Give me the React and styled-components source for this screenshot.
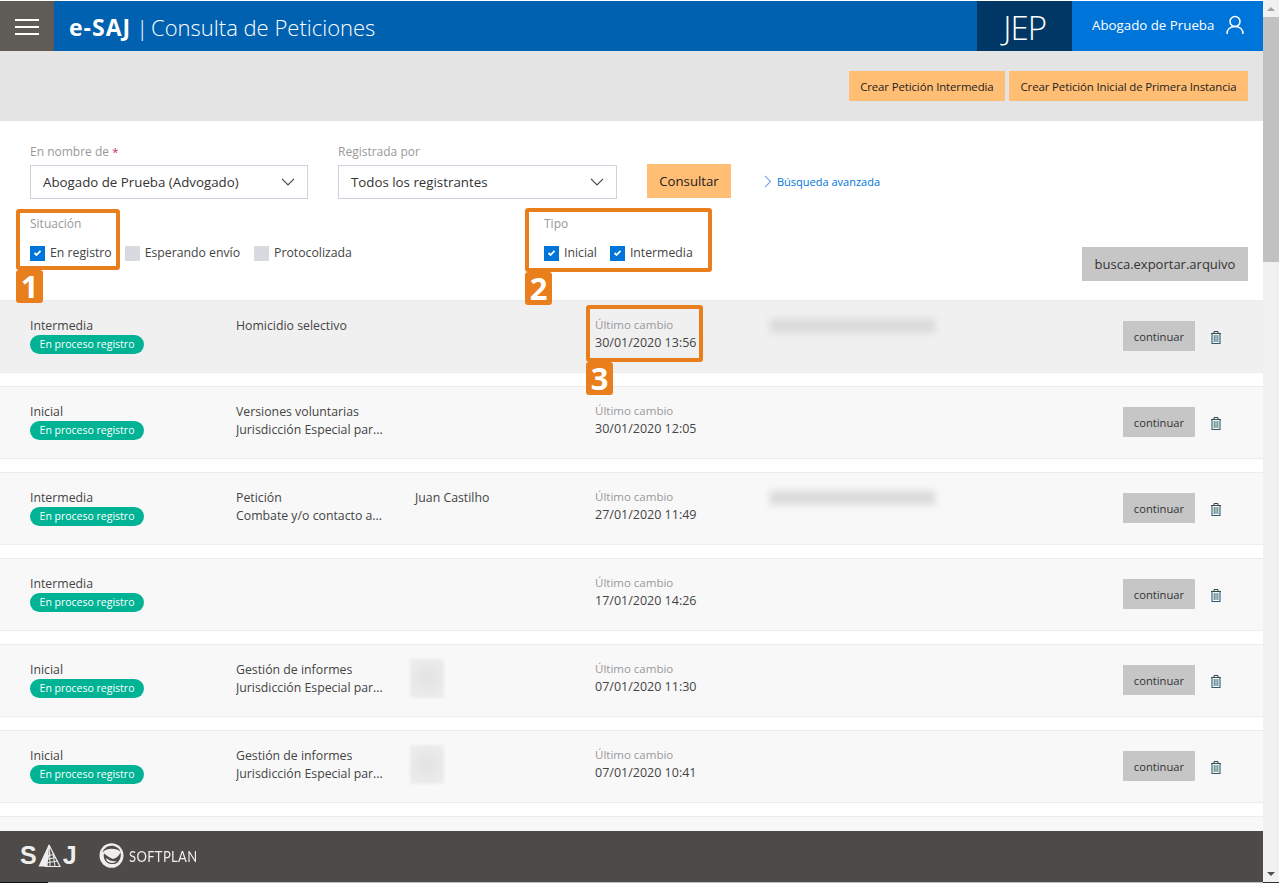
import React from "react";
import styled, { createGlobalStyle } from "styled-components";

const Global = createGlobalStyle`
  html, body { margin: 0; padding: 0; height: 100%; overflow: hidden; background: #fff; }
  #root { height: 100%; }
  * { box-sizing: border-box; }
  body { font-family: "Open Sans", "Noto Sans", "Liberation Sans", sans-serif; color: #333; }
`;

const Shell = styled.div`
  position: relative; display: flex; width: 1279px; height: 883px; overflow: hidden; background: #fff;
`;
const Main = styled.div`flex: 1; min-width: 0; padding-top: 1px;`;
const Scrollbar = styled.div`
  width: 16px; background: #f1f1f1; border-bottom: 1px solid #333; display: flex; flex-direction: column; align-items: center;
`;
const ScrollArrow = styled.div`
  width: 0; height: 0; margin: ${p => p.$down ? "auto 0 6px" : "7px 0 6px"};
  border-left: 4px solid transparent; border-right: 4px solid transparent;
  ${p => p.$down ? "border-top: 4px solid #505050;" : "border-bottom: 4px solid #a3a3a3;"}
`;
const ScrollThumb = styled.div`width: 100%; height: 245px; background: #c1c1c1;`;

const Header = styled.header`display: flex; height: 50px; background: #0061b0; color: #fff;`;
const Burger = styled.div`
  width: 54px; background: #5f5b56; display: flex; flex-direction: column; justify-content: center; align-items: center; gap: 5px; padding-top: 1px;
  span { display: block; width: 24px; height: 2px; background: #fff; }
`;
const Title = styled.div`
  flex: 1; display: flex; padding-left: 15px; font-size: 22px; line-height: 52px; font-weight: 300; white-space: nowrap;
  b { font-weight: 700; font-size: 23px; letter-spacing: 1px; }
`;
const Sep = styled.span`margin: 0 3px 0 5px;`;
const Jep = styled.div`
  width: 95px; background: #003764; font-size: 33px; font-weight: 300; line-height: 54px; text-align: right; padding-right: 26px; letter-spacing: -1px;
`;
const User = styled.div`
  width: 191px; background: #0075d9; display: flex; align-items: center; padding: 0 19px 0 20px; font-size: 13.300px; justify-content: space-between;
  span { margin-top: -3px; white-space: nowrap; }
  svg { margin-top: -3px; }
`;

const ActionBar = styled.div`
  height: 70px; background: #e4e4e4; display: flex; justify-content: flex-end; gap: 4px; padding: 20px 15px 0 0;
`;
const PeachButton = styled.button`
  height: ${p => p.$h || 30}px; padding: 0 11.500px; border: 0; background: #ffbe73; color: #222; font: inherit; font-size: 11.400px; white-space: nowrap; letter-spacing: -0.1px;
`;

const Filters = styled.section`height: 179px; padding: 23px 15px 0 30px;`;
const FieldRow = styled.div`display: flex; align-items: flex-end;`;
const Field = styled.div`width: ${p => p.$w}px; margin-right: ${p => p.$mr}px;`;
const Label = styled.div`
  color: #999; font-size: 12px; line-height: 16px; height: 21px;
  i { color: #d0245e; font-style: normal; font-size: 11px; }
`;
const Select = styled.div`
  height: 34px; border: 1px solid #ccd3dc; display: flex; align-items: center; justify-content: space-between; padding: 0 12px; font-size: 13.300px; color: #333; background: #fff;
`;
const Consultar = styled(PeachButton)`font-size: 13.200px; width: 84px; padding: 0; margin-bottom: 1px; color: #222; letter-spacing: 0;`;
const Advanced = styled.a`
  display: flex; align-items: center; gap: 5px; margin: 0 0 9px 33px; color: #0075d9; font-size: 11px; height: 18px; white-space: nowrap;
`;

const ChecksRow = styled.div`display: flex; margin-top: 17px; position: relative;`;
const Group = styled.div`width: ${p => p.$w}px;`;
const GroupLabel = styled.div`color: #999; font-size: 12px; line-height: 16px; margin-bottom: 13px;`;
const Checks = styled.div`display: flex;`;
const Check = styled.label`
  display: flex; align-items: center; gap: 5px; margin-right: ${p => p.$mr}px; font-size: 12.250px; color: #444; line-height: 16px; white-space: nowrap;
`;
const Box = styled.span`
  width: 15px; height: 15px; display: flex; align-items: center; justify-content: center; background: ${p => p.$on ? "#0075d9" : "#d7dbe0"};
`;
const ExportSlot = styled.div`flex: 1; display: flex; justify-content: flex-end; align-items: flex-end; margin-bottom: -20px;`;
const GreyButton = styled.button`
  width: ${p => p.$w}px; height: ${p => p.$h}px; border: 0; background: #c6c6c6; color: #333; font: inherit; font-size: ${p => p.$fs}px; padding: ${p => p.$pt || 0}px 0 0; white-space: nowrap;
`;

const List = styled.div`display: flex; flex-direction: column; gap: 13px;`;
const Row = styled.article`
  height: 73px; flex: none; background: ${p => p.$active ? "#f0f0f0" : "#f8f8f8"};
  border-top: 1px solid #ececec; border-bottom: 1px solid #ececec;
  display: grid; grid-template-columns: 206px 179px 180px 1fr 72px 68px; padding: 16px 0 0 30px; font-size: 12.300px; line-height: 18px; color: #444;
`;
const Cell = styled.div`min-width: 0; position: relative;`;
const Pill = styled.div`
  width: 114px; height: 19px; border-radius: 10px; background: #00b394; color: #fff; font-size: 10.500px; line-height: 18px; text-align: center; white-space: nowrap;
`;
const Clip = styled.div`white-space: nowrap; overflow: hidden;`;
const Muted = styled.div`color: #999; font-size: 11.500px; margin-top: -1px;`;
const DateText = styled.div`font-size: 12.500px;`;
const BlurBar = styled.div`
  position: absolute; left: 175px; top: 2px; width: 165px; height: 14px; background: #dadada; filter: blur(3.500px);
`;
const BlurSquare = styled.div`
  position: absolute; left: -5px; top: -2px; width: 34px; height: 39px; background: radial-gradient(circle, #e3e3e3, #eeeeee); filter: blur(1px);
`;
const ActionCell = styled.div`margin-top: 4px;`;
const TrashCell = styled.div`margin-top: 5px; height: 30px; display: flex; align-items: center; padding-left: 16px;`;

const Footer = styled.footer`
  position: absolute; left: 0; right: 16px; bottom: 0; height: 52px; background: #4d4a47; border-bottom: 1px solid #c0c0c0; display: flex; align-items: center; padding: 0 0 2px 20px; gap: 22px;
  &::after { content: ""; position: absolute; left: 0; bottom: -1px; width: 48px; height: 1px; background: #111; }
`;
const Softplan = styled.span`
  color: #eee; font-size: 15.500px; font-family: "Lato", sans-serif; font-weight: 400; letter-spacing: 0.4px; margin-left: 5px; transform: scaleX(.84); transform-origin: left;
`;
const LogoGroup = styled.div`display: flex; align-items: center;`;
const SajText = styled.span`color: #eee; font: 700 25px "Liberation Sans", sans-serif;`;

const Mark = styled.div`
  position: absolute; left: ${p => p.$x}px; top: ${p => p.$y}px; width: ${p => p.$w}px; height: ${p => p.$h}px;
  border: 4px solid #e87f1c; border-radius: 3px; pointer-events: none;
`;
const MarkNum = styled.div`
  position: absolute; left: ${p => p.$x}px; top: ${p => p.$y}px; width: 27px; height: 33px; background: #e87f1c; border-radius: 3px; color: #fff;
  font: 700 31px/33px "Open Sans", sans-serif; text-align: center;
`;

const Chevron = ({ w = 14, h = 8, color = "#444" }) => (
  <svg width={w} height={h} viewBox="0 0 14 8" fill="none"><path d="M1 .8 7 7l6-6.200" stroke={color} strokeWidth="1.100" /></svg>
);
const Tick = () => (
  <svg width="9" height="8" viewBox="0 0 9 8" fill="none"><path d="M1.500 4 3.500 6 7.500 1.800" stroke="#fff" strokeWidth="1.800" /></svg>
);
const Trash = () => (
  <svg width="10" height="13" viewBox="0 0 10 13" fill="none">
    <path d="M0 2.500h10M3 2.500V.5h4v2" stroke="#33474c" strokeWidth="1" />
    <path d="M1 2.500v10h8v-10" stroke="#2e5f70" strokeWidth="1.100" />
    <path d="M3.300 4v7" stroke="#3f93c4" strokeWidth="1.200" />
    <path d="M5 4v7" stroke="#b07a3a" strokeWidth="1.200" />
    <path d="M6.800 4v7" stroke="#3f93c4" strokeWidth="1.200" />
  </svg>
);
const UserIcon = () => (
  <svg width="18" height="20" viewBox="0 0 18 20" fill="none" stroke="#fff" strokeWidth="1.500">
    <circle cx="9" cy="6.500" r="5" />
    <path d="M1 19c0-4.500 3-7.500 8-7.500s8 3 8 7.500" />
  </svg>
);
const SajMark = () => (
  <svg width="26" height="24" viewBox="0 0 26 24" fill="none" stroke="#eee" strokeWidth="1">
    <path d="M12 0 1.500 22.500h9L12 4Z" fill="#eee" stroke="none" />
    <path d="M12 1 23 22.500H8" strokeWidth="1.200" />
    <path d="M12.500 1 13 22.500M16 9.500 18 22.500M13 8.500 8 22.500" />
    <path d="M10 12 16.500 10.500M9 15.500 19 13.500M8 19 21 17" />
  </svg>
);
const SoftplanMark = () => (
  <svg width="25" height="25" viewBox="0 0 25 25">
    <ellipse cx="12.500" cy="12.500" rx="12" ry="12.300" fill="#eee" />
    <path d="M3.500 9.500c1-4 5-6.800 9-6.800s8 2.500 9 6c-1.500-2-5-3-9-3S5 7 3.500 9.500Z" fill="#4d4a47" />
    <path d="M21.500 9.500C20 13 16.500 15.500 14 16 10 14.500 7 12 5 10.500 4 13 5 17 8 19.500c3 2 8 2 10.500 0C21 17.500 22.500 13 21.500 9.500Z" fill="#4d4a47" />
    <path d="M7 15c3 2.500 7 4 11 3-2.500 2.500-7 2.500-9.500.5-1-.8-1.300-2.500-1.500-3.500Z" fill="#eee" />
  </svg>
);

const rows = [
  { type: "Intermedia", a: "Homicidio selectivo", b: "", who: "", date: "30/01/2020 13:56", blur: true, active: true },
  { type: "Inicial", a: "Versiones voluntarias", b: "Jurisdicción Especial par...", who: "", date: "30/01/2020 12:05" },
  { type: "Intermedia", a: "Petición", b: "Combate y/o contacto a...", who: "Juan Castilho", date: "27/01/2020 11:49", blur: true },
  { type: "Intermedia", a: "", b: "", who: "", date: "17/01/2020 14:26" },
  { type: "Inicial", a: "Gestión de informes", b: "Jurisdicción Especial par...", square: true, date: "07/01/2020 11:30" },
  { type: "Inicial", a: "Gestión de informes", b: "Jurisdicción Especial par...", square: true, date: "07/01/2020 10:41" },
];

export default function App() {
  return (
    <Shell>
      <Global />
      <Main>
        <Header>
          <Burger><span /><span /><span /></Burger>
          <Title><b>e-SAJ</b><Sep>|</Sep><span>Consulta de Peticiones</span></Title>
          <Jep>JEP</Jep>
          <User><span>Abogado de Prueba</span><UserIcon /></User>
        </Header>
        <ActionBar>
          <PeachButton>Crear Petición Intermedia</PeachButton>
          <PeachButton>Crear Petición Inicial de Primera Instancia</PeachButton>
        </ActionBar>
        <Filters>
          <FieldRow>
            <Field $w={278} $mr={30}>
              <Label>En nombre de <i>*</i></Label>
              <Select>Abogado de Prueba (Advogado)<Chevron /></Select>
            </Field>
            <Field $w={279} $mr={30}>
              <Label>Registrada por</Label>
              <Select>Todos los registrantes<Chevron /></Select>
            </Field>
            <Consultar $h={34}>Consultar</Consultar>
            <Advanced>
              <svg width="8" height="13" viewBox="0 0 8 13" fill="none"><path d="m1 .8 5.500 5.700L1 12.200" stroke="#7f9fe0" strokeWidth="1.100" /></svg>
              Búsqueda avanzada
            </Advanced>
          </FieldRow>
          <ChecksRow>
            <Group $w={514}>
              <GroupLabel>Situación</GroupLabel>
              <Checks>
                <Check $mr={13}><Box $on><Tick /></Box>En registro</Check>
                <Check $mr={14}><Box />Esperando envío</Check>
                <Check $mr={0}><Box />Protocolizada</Check>
              </Checks>
            </Group>
            <Group $w={300}>
              <GroupLabel>Tipo</GroupLabel>
              <Checks>
                <Check $mr={13}><Box $on><Tick /></Box>Inicial</Check>
                <Check $mr={0}><Box $on><Tick /></Box>Intermedia</Check>
              </Checks>
            </Group>
            <ExportSlot><GreyButton $w={166} $h={34} $fs={13}>busca.exportar.arquivo</GreyButton></ExportSlot>
          </ChecksRow>
        </Filters>
        <List>
          {rows.map((r, i) => (
            <Row key={i} $active={r.active}>
              <Cell>{r.type}<Pill>En proceso registro</Pill></Cell>
              <Cell><Clip>{r.a}</Clip><Clip>{r.b}</Clip></Cell>
              <Cell>{r.square ? <BlurSquare /> : r.who}</Cell>
              <Cell><Muted>Último cambio</Muted><DateText>{r.date}</DateText>{r.blur && <BlurBar />}</Cell>
              <ActionCell><GreyButton $w={72} $h={30} $fs={11.2} $pt={2}>continuar</GreyButton></ActionCell>
              <TrashCell><Trash /></TrashCell>
            </Row>
          ))}
          <Row />
        </List>
      </Main>
      <Scrollbar><ScrollArrow /><ScrollThumb /><ScrollArrow $down /></Scrollbar>
      <Footer>
        <LogoGroup><SajText>S</SajText><SajMark /><SajText>J</SajText></LogoGroup>
        <LogoGroup><SoftplanMark /><Softplan>SOFTPLAN</Softplan></LogoGroup>
      </Footer>
      <Mark $x={16} $y={209} $w={104} $h={61} />
      <MarkNum $x={16} $y={270}>1</MarkNum>
      <Mark $x={525} $y={208} $w={187} $h={64} />
      <MarkNum $x={525} $y={272}>2</MarkNum>
      <Mark $x={586} $y={305} $w={117} $h={57} />
      <MarkNum $x={586} $y={362}>3</MarkNum>
    </Shell>
  );
}
